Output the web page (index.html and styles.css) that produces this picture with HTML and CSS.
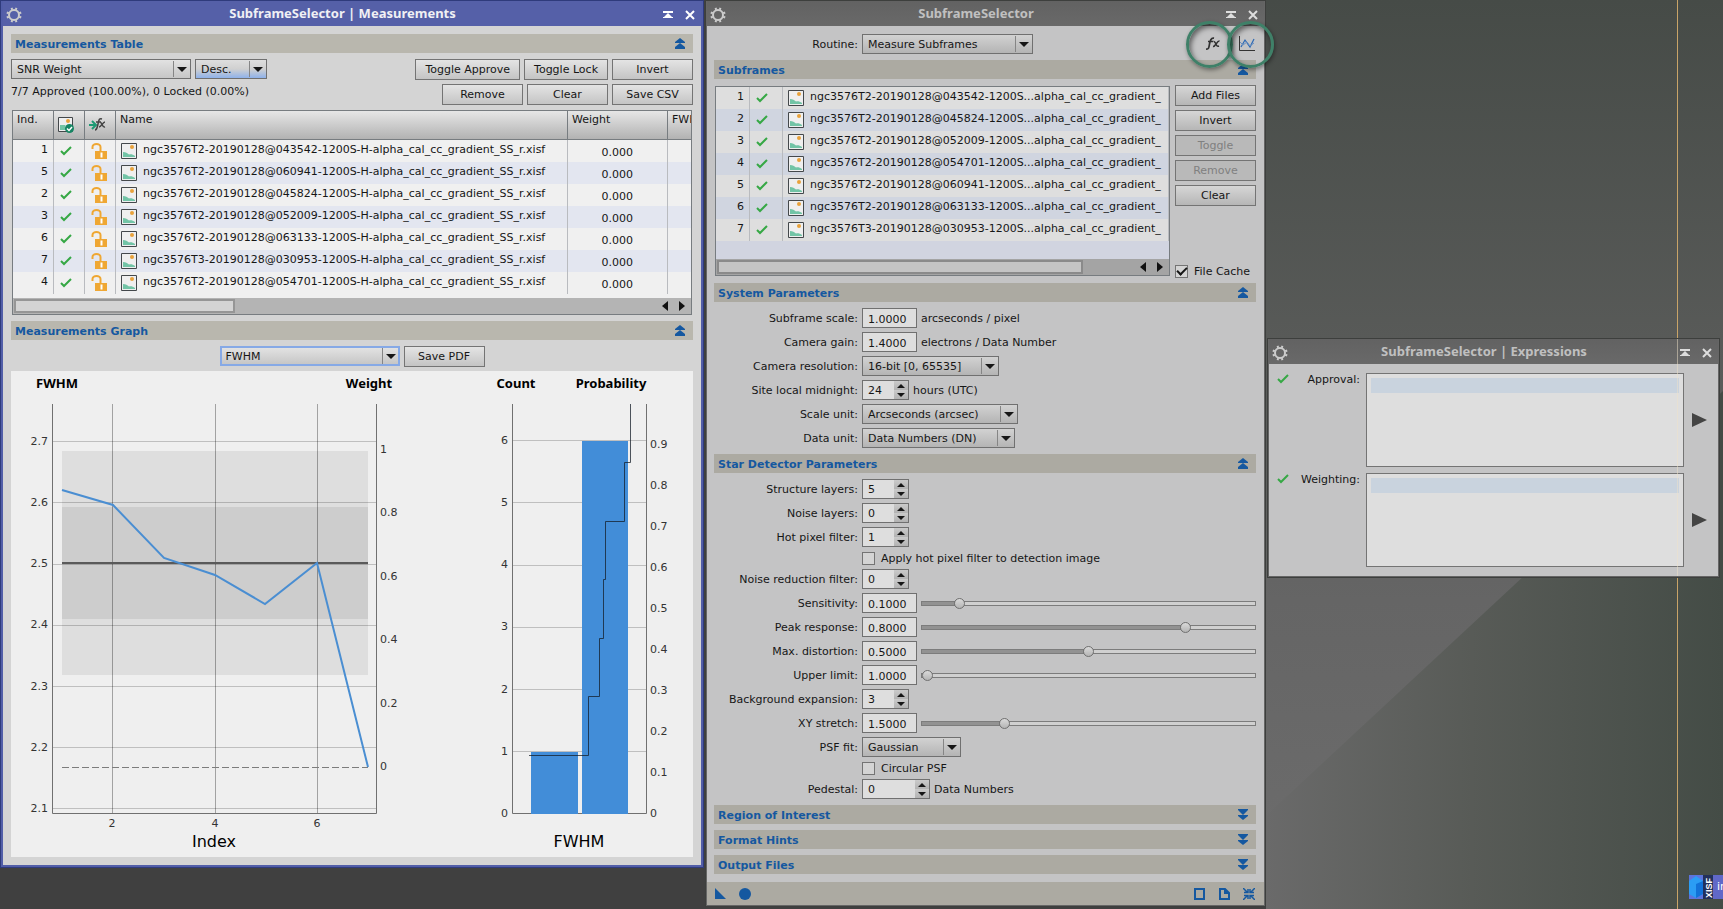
FILE: index.html
```html
<!DOCTYPE html>
<html lang="en">
<head>
<meta charset="utf-8">
<title>SubframeSelector</title>
<link rel="stylesheet" href="styles.css">
</head>
<body>
<!-- shared icons -->
<svg class="symbols" aria-hidden="true">
    <symbol id="gear" viewBox="0 0 16 16">
        <circle cx="8" cy="8" r="5" fill="none" stroke="currentColor" stroke-width="2"/>
        <g stroke="currentColor" stroke-width="2">
            <path d="M5.500 .8l.8 2M10.500 .8l-.8 2M5.500 15.200l.8-2M10.500 15.200l-.8-2M.8 5.500l2 .8M.8 10.500l2-.8M15.200 5.500l-2 .8M15.200 10.500l-2-.8"/>
        </g>
    </symbol>
    <symbol id="shade" viewBox="0 0 10 8">
        <path d="M0 0h10v2H0zM5 2l4 4h1v1H0V6h1z" fill="currentColor"/>
    </symbol>
    <symbol id="close" viewBox="0 0 10 10">
        <path d="M1 1l8 8M9 1l-8 8" stroke="currentColor" stroke-width="2"/>
    </symbol>
    <symbol id="up" viewBox="0 0 12 11">
        <path d="M6 0l5 4v1H1V4zM6 5l5 4v2H1V9z" fill="currentColor"/>
    </symbol>
    <symbol id="down" viewBox="0 0 12 11">
        <path d="M1 0h10v1L6 6 1 1zM1 6h10v1l-5 4-5-4z" fill="currentColor"/>
    </symbol>
    <symbol id="check" viewBox="0 0 12 10">
        <path d="M1 5l3 3 7-7" fill="none" stroke="#36a845" stroke-width="2"/>
    </symbol>
    <symbol id="lock" viewBox="0 0 17 17">
        <path d="M1.500 6V4a4 3 0 0 1 8 0v4" fill="none" stroke="#efa733" stroke-width="2"/>
        <path d="M4 8h12v8H4z" fill="#efa733"/>
        <path d="M9.500 9.500h2v5h-2z" fill="#fff"/>
    </symbol>
    <symbol id="image" viewBox="0 0 16 16">
        <path d="M.5 .5h15v15H.5z" fill="#efefef" stroke="#44484b"/>
        <circle cx="11" cy="4" r="2" fill="#e9a23b"/>
        <path d="M2 14V9c3 0 4 1 6 2.500 2-.5 4 0 6 1.500v1z" fill="#72c4a6"/>
    </symbol>
    <symbol id="approved" viewBox="0 0 17 17">
        <path d="M.5 .5h14v14H.5z" fill="#efefef" stroke="#44484b"/>
        <circle cx="10" cy="4" r="2" fill="#e9a23b"/>
        <path d="M2 8h5l1 5H2z" fill="#72c4a6"/>
        <circle cx="11.500" cy="11.500" r="4.500" fill="#168563"/>
        <path d="M9 11.500l2 2 3-3.500" fill="none" stroke="#fff" stroke-width="1.500"/>
    </symbol>
    <symbol id="gofx" viewBox="0 0 17 14">
        <path d="M0 8h6M3 4l4 4-4 4" fill="none" stroke="#1d9a74" stroke-width="2"/>
        <path d="M6 13c2 0 2-2 3-6s1-6 4-5M7 5h5M11 5c2 0 2 6 5 5M16 5c-2 0-4 5-6 5" fill="none" stroke="#444" stroke-width="1.500"/>
    </symbol>
    <symbol id="fx" viewBox="0 0 14 13">
        <path d="M0 12c3 .5 3-2 3.500-5S5 .5 8 1.200M2 4.500h5" fill="none" stroke="#303030" stroke-width="1.700"/>
        <path d="M7.500 4.500c2.500-1 2 6 5.500 4.500M13.500 4c-2.500-.5-4 6-6.500 5.500" fill="none" stroke="#303030" stroke-width="1.500"/>
    </symbol>
    <symbol id="plot" viewBox="0 0 17 17">
        <path d="M1.500 1v14.500H17" fill="none" stroke="#333"/>
        <path d="M3 12l4-7 5 7 4-8" fill="none" stroke="#2a68b4" stroke-width="1.200"/>
        <path d="M2 7l3 3 4-3 3 4 4-3" fill="none" stroke="#6a8fc0"/>
    </symbol>
    <symbol id="left" viewBox="0 0 6 10"><path d="M6 0v10L0 5z" fill="#111"/></symbol>
    <symbol id="right" viewBox="0 0 6 10"><path d="M0 0v10l6-5z" fill="#111"/></symbol>
</svg>

<div class="desktop">
    <div class="backdrop"></div>
    <div class="guide"></div>

    <div class="tray">
        <svg width="24" height="24" viewBox="0 0 24 24">
            <path d="M0 0h14v24H0z" fill="#5c74dc"/>
            <path d="M0 6l7-5 7 5v13l-7 4-7-4z" fill="#2b9df4"/>
            <path d="M7 9l7-3v13l-7 4z" fill="#1272d8"/>
            <path d="M14 0h10v24H14z" fill="#22305c"/>
            <text x="-23" y="23" transform="rotate(-90)" class="tray-logo">XISF</text>
        </svg>
        <span>in</span>
    </div>

    <!-- Measurements -->
    <section class="window active measurements">
        <header class="titlebar">
            <svg width="16" height="16"><use href="#gear"/></svg>
            <h1>SubframeSelector | Measurements</h1>
            <button aria-label="Shade"><svg width="10" height="8"><use href="#shade"/></svg></button>
            <button aria-label="Close"><svg width="10" height="10"><use href="#close"/></svg></button>
        </header>
        <div class="body">
            <div class="section-bar"><h2>Measurements Table</h2><button aria-label="Collapse"><svg width="12" height="11"><use href="#up"/></svg></button></div>
            <div class="toolbar">
                <div>
                    <div class="line">
                        <span class="combo w180"><select aria-label="Sort by"><option>SNR Weight</option></select></span>
                        <span class="combo w72 hot"><select aria-label="Order"><option>Desc.</option></select></span>
                    </div>
                    <p class="status">7/7 Approved (100.00%), 0 Locked (0.00%)</p>
                </div>
                <div class="actions">
                    <div class="line">
                        <button class="btn">Toggle Approve</button>
                        <button class="btn">Toggle Lock</button>
                        <button class="btn">Invert</button>
                    </div>
                    <div class="line">
                        <button class="btn">Remove</button>
                        <button class="btn">Clear</button>
                        <button class="btn">Save CSV</button>
                    </div>
                </div>
            </div>
            <div class="listbox">
                <table class="measure-table">
                    <colgroup><col class="c-ind"><col class="c-icon"><col class="c-icon"><col class="c-name"><col class="c-weight"><col class="c-weight"></colgroup>
                    <thead>
                        <tr>
                            <th>Ind.</th>
                            <th class="pic"><svg width="17" height="17"><use href="#approved"/></svg></th>
                            <th class="pic"><svg width="17" height="14"><use href="#gofx"/></svg></th>
                            <th>Name</th>
                            <th>Weight</th>
                            <th>FWHM</th>
                        </tr>
                    </thead>
                    <tbody id="measureRows"></tbody>
                </table>
                <div class="scrollbar">
                    <div class="thumb third"></div>
                    <svg width="6" height="10"><use href="#left"/></svg>
                    <svg width="6" height="10"><use href="#right"/></svg>
                </div>
            </div>
            <div class="section-bar"><h2>Measurements Graph</h2><button aria-label="Collapse"><svg width="12" height="11"><use href="#up"/></svg></button></div>
            <div class="line graph-tools">
                <span class="combo w180 focus"><select aria-label="Graph"><option>FWHM</option></select></span>
                <button class="btn">Save PDF</button>
            </div>
            <svg class="graph" viewBox="11 371 682 486">
                <g class="heads">
                    <text x="57" y="388">FWHM</text>
                    <text x="369" y="388">Weight</text>
                    <text x="516" y="388">Count</text>
                    <text x="611" y="388">Probability</text>
                </g>
                <rect x="62" y="451" width="306" height="224" fill="#dedede"/>
                <rect x="62" y="507" width="306" height="112" fill="#cdcdcd"/>
                <path class="grid" d="M53 441.500H376M53 502.500H376M53 564.500H376M53 625.500H376M53 686.500H376M53 747.500H376M53 808.500H376M513 440.500H646M513 502.500H646M513 565.500H646M513 627.500H646M513 689.500H646M513 751.500H646"/>
                <path class="grid strong" d="M112.500 404V813M215.500 404V813M317.500 404V813"/>
                <path class="median" d="M62 563H368"/>
                <path class="dashed" d="M62 767.500H368"/>
                <path class="series" d="M62 490L113 505 164 558 215 575 265 604 317 563 368 767"/>
                <path class="axis" d="M52.500 404V813.500H376.500V404"/>
                <path class="axis" d="M512.500 404V813.500H646.500V404"/>
                <path fill="#428dd8" d="M531 752h47v62h-47zM582 441h46v373h-46z"/>
                <path class="cdf" d="M529 755.500H588.500V696.500H599.500V638.500H603.500V579.500H605.500V521.500H624.500V462.500H630.500V404"/>
                <g class="ticks end" id="ticksLeft"></g>
                <g class="ticks" id="ticksRight"></g>
                <g class="ticks mid">
                    <text x="112" y="827">2</text>
                    <text x="215" y="827">4</text>
                    <text x="317" y="827">6</text>
                </g>
                <g class="axis-names">
                    <text x="214" y="847">Index</text>
                    <text x="579" y="847">FWHM</text>
                </g>
            </svg>
        </div>
    </section>

    <!-- Main process window -->
    <section class="window selector">
        <header class="titlebar">
            <svg width="16" height="16"><use href="#gear"/></svg>
            <h1>SubframeSelector</h1>
            <button aria-label="Shade"><svg width="10" height="8"><use href="#shade"/></svg></button>
            <button aria-label="Close"><svg width="10" height="10"><use href="#close"/></svg></button>
        </header>
        <div class="body">
            <div class="field first">
                <label for="routine">Routine:</label>
                <span class="combo w171"><select id="routine"><option>Measure Subframes</option></select></span>
                <div class="views">
                    <button aria-label="Expressions"><svg width="14" height="13"><use href="#fx"/></svg></button>
                    <button aria-label="Measurements"><svg width="17" height="17"><use href="#plot"/></svg></button>
                </div>
            </div>
            <div class="section-bar"><h2>Subframes</h2><button aria-label="Collapse"><svg width="12" height="11"><use href="#up"/></svg></button></div>
            <div class="subframes">
                <div class="listbox">
                    <table class="subframe-table">
                        <colgroup><col class="c-num"><col class="c-check"><col></colgroup>
                        <tbody id="subframeRows"></tbody>
                    </table>
                    <div class="scrollbar">
                        <div class="thumb wide"></div>
                        <svg width="6" height="10"><use href="#left"/></svg>
                        <svg width="6" height="10"><use href="#right"/></svg>
                    </div>
                </div>
                <div class="side">
                    <button class="btn">Add Files</button>
                    <button class="btn">Invert</button>
                    <button class="btn" disabled>Toggle</button>
                    <button class="btn" disabled>Remove</button>
                    <button class="btn">Clear</button>
                    <label class="tick cache"><input type="checkbox" checked> <span>File Cache</span></label>
                </div>
            </div>

            <div class="section-bar"><h2>System Parameters</h2><button aria-label="Collapse"><svg width="12" height="11"><use href="#up"/></svg></button></div>
            <div class="fields">
                <div class="field"><label for="scale">Subframe scale:</label><input class="edit" id="scale" value="1.0000"><span class="unit">arcseconds / pixel</span></div>
                <div class="field"><label for="gain">Camera gain:</label><input class="edit" id="gain" value="1.4000"><span class="unit">electrons / Data Number</span></div>
                <div class="field"><label for="res">Camera resolution:</label><span class="combo w137"><select id="res"><option>16-bit [0, 65535]</option></select></span></div>
                <div class="field"><label for="midnight">Site local midnight:</label><span class="spin"><input id="midnight" value="24"><button aria-label="Up"></button><button aria-label="Down"></button></span><span class="unit">hours (UTC)</span></div>
                <div class="field"><label for="sunit">Scale unit:</label><span class="combo w156"><select id="sunit"><option>Arcseconds (arcsec)</option></select></span></div>
                <div class="field"><label for="dunit">Data unit:</label><span class="combo w153"><select id="dunit"><option>Data Numbers (DN)</option></select></span></div>
            </div>

            <div class="section-bar"><h2>Star Detector Parameters</h2><button aria-label="Collapse"><svg width="12" height="11"><use href="#up"/></svg></button></div>
            <div class="fields">
                <div class="field"><label for="layers">Structure layers:</label><span class="spin"><input id="layers" value="5"><button aria-label="Up"></button><button aria-label="Down"></button></span></div>
                <div class="field"><label for="noise">Noise layers:</label><span class="spin"><input id="noise" value="0"><button aria-label="Up"></button><button aria-label="Down"></button></span></div>
                <div class="field"><label for="hot">Hot pixel filter:</label><span class="spin"><input id="hot" value="1"><button aria-label="Up"></button><button aria-label="Down"></button></span></div>
                <label class="tick indent"><input type="checkbox"> <span>Apply hot pixel filter to detection image</span></label>
                <div class="field"><label for="nrf">Noise reduction filter:</label><span class="spin"><input id="nrf" value="0"><button aria-label="Up"></button><button aria-label="Down"></button></span></div>
                <div class="field"><label for="sens">Sensitivity:</label><input class="edit" id="sens" value="0.1000"><input type="range" aria-label="Sensitivity" value="10" style="--v:10%"></div>
                <div class="field"><label for="peak">Peak response:</label><input class="edit" id="peak" value="0.8000"><input type="range" aria-label="Peak response" value="80" style="--v:80%"></div>
                <div class="field"><label for="dist">Max. distortion:</label><input class="edit" id="dist" value="0.5000"><input type="range" aria-label="Max. distortion" value="50" style="--v:50%"></div>
                <div class="field"><label for="upper">Upper limit:</label><input class="edit" id="upper" value="1.0000"><input type="range" aria-label="Upper limit" value="0" style="--v:0%"></div>
                <div class="field"><label for="bg">Background expansion:</label><span class="spin"><input id="bg" value="3"><button aria-label="Up"></button><button aria-label="Down"></button></span></div>
                <div class="field"><label for="xy">XY stretch:</label><input class="edit" id="xy" value="1.5000"><input type="range" aria-label="XY stretch" value="24" style="--v:24%"></div>
                <div class="field"><label for="psf">PSF fit:</label><span class="combo w99"><select id="psf"><option>Gaussian</option></select></span></div>
                <label class="tick indent"><input type="checkbox"> <span>Circular PSF</span></label>
                <div class="field"><label for="ped">Pedestal:</label><span class="spin large"><input id="ped" value="0"><button aria-label="Up"></button><button aria-label="Down"></button></span><span class="unit">Data Numbers</span></div>
            </div>

            <div class="section-bar"><h2>Region of Interest</h2><button aria-label="Expand"><svg width="12" height="11"><use href="#down"/></svg></button></div>
            <div class="section-bar"><h2>Format Hints</h2><button aria-label="Expand"><svg width="12" height="11"><use href="#down"/></svg></button></div>
            <div class="section-bar"><h2>Output Files</h2><button aria-label="Expand"><svg width="12" height="11"><use href="#down"/></svg></button></div>
        </div>
        <footer class="controls">
            <button aria-label="New instance"><svg width="12" height="12"><path d="M1 0v11h11z" fill="currentColor"/></svg></button>
            <button aria-label="Apply global"><svg width="12" height="12"><circle cx="6" cy="6" r="6" fill="currentColor"/></svg></button>
            <span class="spacer"></span>
            <button aria-label="Edit instance source"><svg width="12" height="12"><path d="M2 1h9v10H2z" fill="none" stroke="currentColor" stroke-width="2"/></svg></button>
            <button aria-label="Browse documentation"><svg width="12" height="12"><path d="M2 1h5l4 4v6H2zM7 1v4h4" fill="none" stroke="currentColor" stroke-width="2"/></svg></button>
            <button aria-label="Reset"><svg width="12" height="12"><path d="M0 0l4 4M12 0L8 4M0 12l4-4M12 12L8 8M1 4.500h4V1M11 4.500H7V1M1 7.500h4V11M11 7.500H7V11" fill="none" stroke="currentColor" stroke-width="1.500"/></svg></button>
        </footer>
        <div class="ring ring-fx"></div>
        <div class="ring ring-plot"></div>
    </section>

    <!-- Expressions -->
    <section class="window expressions">
        <header class="titlebar">
            <svg width="16" height="16"><use href="#gear"/></svg>
            <h1>SubframeSelector | Expressions</h1>
            <button aria-label="Shade"><svg width="10" height="8"><use href="#shade"/></svg></button>
            <button aria-label="Close"><svg width="10" height="10"><use href="#close"/></svg></button>
        </header>
        <div class="body">
            <div class="expr">
                <svg width="12" height="10"><use href="#check"/></svg>
                <label for="approval">Approval:</label>
                <textarea id="approval"></textarea>
                <button aria-label="Insert"><svg width="15" height="14"><path d="M0 0v14l15-7z" fill="#444"/></svg></button>
            </div>
            <div class="expr">
                <svg width="12" height="10"><use href="#check"/></svg>
                <label for="weighting">Weighting:</label>
                <textarea id="weighting"></textarea>
                <button aria-label="Insert"><svg width="15" height="14"><path d="M0 0v14l15-7z" fill="#444"/></svg></button>
            </div>
        </div>
    </section>
</div>

<script>
var frames = ['T2-20190128@043542', 'T2-20190128@045824', 'T2-20190128@052009', 'T2-20190128@054701',
              'T2-20190128@060941', 'T2-20190128@063133', 'T3-20190128@030953'];
var order = [1, 5, 2, 3, 6, 7, 4];

function icon(name, w, h) {
    return '<svg width="' + w + '" height="' + h + '"><use href="#' + name + '"/></svg>';
}

// measurements, sorted by weight
document.getElementById('measureRows').innerHTML = order.map(function(n) {
    return '<tr><td class="num">' + n + '</td><td class="mark">' + icon('check', 12, 10) + '</td><td class="mark">' + icon('lock', 17, 17) +
        '</td><td class="file">' + icon('image', 16, 16) + '<span>ngc3576' + frames[n - 1] +
        '-1200S-H-alpha_cal_cc_gradient_SS_r.xisf</span></td><td class="weight">0.000</td><td></td></tr>';
}).join('');

// subframe list
document.getElementById('subframeRows').innerHTML = frames.map(function(f, i) {
    return '<tr><td class="num">' + (i + 1) + '</td><td class="mark">' + icon('check', 12, 10) +
        '</td><td class="file">' + icon('image', 16, 16) + '<span>ngc3576' + f + '-1200S...alpha_cal_cc_gradient_</span></td></tr>';
}).join('');

// axis labels, evenly spaced from the bottom value up
function ticks(x, y0, step, labels) {
    return labels.map(function(t, i) {
        return '<text x="' + x + '" y="' + Math.round(y0 - i * step) + '">' + t + '</text>';
    }).join('');
}
document.getElementById('ticksLeft').innerHTML =
    ticks(48, 812, 61.2, ['2.1', '2.2', '2.3', '2.4', '2.5', '2.6', '2.7']) +
    ticks(508, 817, 62.2, [0, 1, 2, 3, 4, 5, 6]);
document.getElementById('ticksRight').innerHTML =
    ticks(380, 770, 63.4, ['0', '0.2', '0.4', '0.6', '0.8', '1']) +
    ticks(650, 817, 41, ['0', '0.1', '0.2', '0.3', '0.4', '0.5', '0.6', '0.7', '0.8', '0.9']);
</script>
</body>
</html>
```
FILE: styles.css
```css
* {
    box-sizing: border-box;
}

body {
    margin: 0;
    font: 11px/14px Verdana, "DejaVu Sans", sans-serif;
    color: #161616;
}

h1, h2, p {
    margin: 0;
}

svg {
    display: block;
    flex: none;
}

button, input, select, textarea {
    font: inherit;
    color: inherit;
    margin: 0;
}

button {
    padding: 0;
    border: none;
    background: none;
}

.symbols {
    position: absolute;
    width: 0;
    height: 0;
}

/* desktop */
.desktop {
    position: relative;
    height: 100vh;
    overflow: hidden;
    background: linear-gradient(#464b47, #585a58 340px, #656565 600px, #6d6d6d);
}

.desktop::before {
    content: "";
    position: absolute;
    left: 0;
    top: 0;
    bottom: 0;
    width: 1266px;
    background: #404040;
}

.backdrop {
    position: absolute;
    left: 1266px;
    right: 0;
    top: 391px;
    bottom: 0;
    background: linear-gradient(90deg, #6a6a6a, #585b57 45%, #444c46);
    clip-path: polygon(0 82%, 100% 0, 100% 100%, 0 100%);
}

.guide {
    position: absolute;
    left: 1677px;
    top: 0;
    bottom: 0;
    width: 1px;
    background: #c9a468;
}

.tray {
    position: absolute;
    left: 1689px;
    top: 875px;
    right: 0;
    height: 24px;
    display: flex;
    align-items: center;
    gap: 4px;
    overflow: hidden;
    background: #6068c8;
    color: #fff;
}

.tray-logo {
    font: bold 9px "Liberation Sans", sans-serif;
    fill: #fff;
}

/* windows */
.window {
    position: absolute;
    display: flex;
    flex-direction: column;
    border: 2px solid #666;
    outline: 1px solid #3d3f3d;
    outline-offset: -1px;
    background: #c4c4c5;
}

.window.active {
    border: 3px solid #525ea8;
    border-width: 1px 3px 3px;
    outline-color: #2f3b7c;
    background: #d4d4d4;
}

.measurements {
    left: 0;
    top: 0;
    width: 704px;
}

.selector {
    left: 705px;
    top: 0;
    width: 561px;
    border-width: 1px 2px 2px;
}

.expressions {
    left: 1267px;
    top: 338px;
    width: 453px;
    border-width: 1px 2px 2px;
}

.expressions::after {
    content: "";
    position: absolute;
    left: 408px;
    top: 0;
    bottom: 0;
    width: 1px;
    background: rgba(240, 225, 200, .5);
}

.titlebar {
    display: flex;
    align-items: center;
    gap: 12px;
    height: 25px;
    padding: 2px 6px 0 3px;
    background: linear-gradient(#626262, #696969);
    color: #c0c0c0;
}

.titlebar > svg {
    color: #ccc;
}

.titlebar h1 {
    flex: 1;
    padding-bottom: 3px;
    text-align: center;
    font: bold 13px/18px "Noto Sans", sans-serif;
}

.titlebar button {
    color: #ddd;
}

.active .titlebar {
    background: #5560a8;
    color: #f0f0f4;
}

.active .titlebar button {
    color: #fff;
}

.body {
    padding: 8px;
}

.selector .body {
    padding: 8px 8px 8px 7px;
}

.section-bar {
    display: flex;
    align-items: center;
    justify-content: space-between;
    height: 19px;
    margin-bottom: 6px;
    padding: 0 7px 0 4px;
    background: #acaaa2;
    color: #1558a0;
}

.active .section-bar {
    background: #b9b7ae;
}

.section-bar:last-child {
    margin-bottom: 0;
}

.section-bar h2 {
    padding-top: 2px;
    font: bold 11px/17px Verdana, "DejaVu Sans", sans-serif;
}

.line {
    display: flex;
    gap: 4px;
}

.toolbar {
    display: flex;
    justify-content: space-between;
    margin-bottom: 5px;
}

.actions {
    display: grid;
    gap: 4px;
}

.actions .line {
    justify-content: flex-end;
}

.status {
    padding-top: 6px;
}

.btn {
    min-width: 81px;
    height: 21px;
    padding: 1px 9px 0;
    border: 1px solid #747474;
    background: linear-gradient(#e4e4e4, #c4c4c4);
    white-space: nowrap;
}

.selector .btn {
    background: linear-gradient(#d6d6d6, #b6b6b6);
}

.selector .btn:disabled {
    background: #b9b9b9;
    color: #808080;
}

/* drop-downs */
.combo {
    position: relative;
    display: block;
    height: 20px;
}

.combo select {
    appearance: none;
    width: 100%;
    height: 20px;
    padding: 1px 20px 0 5px;
    border: 1px solid #707070;
    border-radius: 0;
    background: linear-gradient(#d2d2d2, #b4b4b4);
}

.active .combo select {
    background: linear-gradient(#e2e2e2, #c6c6c6);
}

.combo::before {
    content: "";
    position: absolute;
    right: 17px;
    top: 2px;
    bottom: 2px;
    width: 1px;
    background: #858585;
}

.combo::after {
    content: "";
    position: absolute;
    right: 4px;
    top: 8px;
    border: 5px solid transparent;
    border-top-color: #161616;
    border-bottom: none;
}

.active .combo.hot select {
    background: linear-gradient(#dedede, #d0d0d0 50%, #8fb2ea);
}

.active .combo.focus select {
    border: 2px solid #86a9e6;
    padding-left: 4px;
}

.w72 { width: 72px; }
.w99 { width: 99px; }
.w137 { width: 137px; }
.w153 { width: 153px; }
.w156 { width: 156px; }
.w171 { width: 171px; }
.w180 { width: 180px; }

/* tables */
.listbox {
    margin: 0 1px 6px;
    border: 1px solid #777c80;
    background: #f0f0f0;
    overflow: hidden;
}

table {
    table-layout: fixed;
    border-collapse: separate;
    border-spacing: 0;
}

.measure-table {
    width: 755px;
    margin-bottom: 4px;
}

.c-ind { width: 41px; }
.c-icon { width: 31px; }
.c-name { width: 452px; }
.c-weight { width: 100px; }
.c-num { width: 34px; }
.c-check { width: 33px; }

th {
    height: 29px;
    padding: 2px 4px;
    border-right: 1px solid #777c80;
    border-bottom: 1px solid #777c80;
    background: linear-gradient(#e6e6e6, #b2b2b2);
    vertical-align: top;
    text-align: left;
    font-weight: normal;
}

th.pic {
    padding: 6px 4px 0;
}

td {
    height: 22px;
    padding: 0 5px;
    border-right: 1px solid #b9bbbf;
    white-space: nowrap;
}

tr:nth-child(even) td {
    background: #e3e6f0;
}

td.num {
    padding-bottom: 3px;
    text-align: right;
}

td.mark {
    padding-left: 6px;
}

td.file {
    display: flex;
    align-items: center;
    gap: 6px;
}

td.file span {
    padding-bottom: 3px;
}

td.weight {
    padding: 3px 34px 0 0;
    text-align: right;
}

.subframe-table {
    width: 453px;
}

.selector .listbox {
    flex: 1;
    min-width: 0;
    margin: 1px 5px 2px 1px;
    display: flex;
    flex-direction: column;
    background: #d1d4e0;
}

.selector td {
    background: #dedede;
}

.selector tr:nth-child(even) td {
    background: #d0d5e0;
}

.scrollbar {
    display: flex;
    align-items: center;
    gap: 11px;
    height: 16px;
    margin-top: auto;
    padding: 0 6px 0 1px;
    background: #b4b4b4;
}

.selector .scrollbar {
    background: #a4a4a4;
}

.thumb {
    height: 14px;
    margin-right: auto;
    border: 2px solid #969696;
    background: #d4d4d4;
}

.selector .thumb {
    border-color: #8a8a8a;
    background: #c4c4c4;
}

.thumb.third { width: 33%; }
.thumb.wide { width: 82%; }

.subframes {
    display: flex;
    margin-bottom: 5px;
}

.side {
    display: flex;
    flex-direction: column;
    gap: 4px;
    width: 81px;
    height: 193px;
}

.cache {
    margin-top: auto;
}

/* graph */
.graph-tools {
    justify-content: center;
    margin-bottom: 4px;
}

.graph {
    width: 100%;
    background: #efefef;
}

.heads text {
    font: bold 13px "Noto Sans", sans-serif;
    text-anchor: middle;
    fill: #000;
}

.axis-names text {
    font-size: 16px;
    text-anchor: middle;
}

.ticks text {
    fill: #333;
}

.ticks.end text {
    text-anchor: end;
}

.ticks.mid text {
    text-anchor: middle;
}

.grid, .axis, .median, .dashed, .series, .cdf {
    fill: none;
    stroke: rgba(0, 0, 0, .2);
}

.grid.strong {
    stroke: rgba(0, 0, 0, .32);
}

.axis {
    stroke: #707070;
}

.median {
    stroke: #5a5a5a;
    stroke-width: 2;
}

.dashed {
    stroke: #7c7c7c;
    stroke-dasharray: 7 3;
}

.series {
    stroke: #4a8ed2;
    stroke-width: 2;
}

.cdf {
    stroke: rgba(20, 30, 40, .75);
}

/* parameters */
.fields {
    display: grid;
    gap: 4px;
    margin-bottom: 6px;
}

.field {
    display: flex;
    align-items: center;
    gap: 4px;
    height: 20px;
}

.field > label {
    width: 144px;
    padding-top: 2px;
    text-align: right;
}

.field .unit {
    padding-top: 2px;
}

.field.first {
    margin-bottom: 6px;
}

.views {
    display: flex;
    align-items: center;
    gap: 18px;
    margin-left: auto;
    padding: 0 1px 2px 0;
}

.edit {
    width: 55px;
    height: 20px;
    padding: 2px 5px 0;
    border: 1px solid #707070;
    background: #dedede;
}

.spin {
    display: grid;
    grid-template: 9px 9px / 1fr 14px;
    width: 47px;
    height: 20px;
    border: 1px solid #707070;
    background: #dedede;
}

.spin.large {
    width: 68px;
}

.spin input {
    grid-row: span 2;
    min-width: 0;
    padding: 2px 5px 0;
    border: none;
    background: none;
}

.spin button {
    display: grid;
    place-items: center;
    background: linear-gradient(#cacaca, #b2b2b2);
}

.spin button::before {
    content: "";
    border: 4px solid transparent;
    border-bottom-color: #161616;
    border-top: none;
}

.spin button:last-child::before {
    border: 4px solid transparent;
    border-top-color: #161616;
    border-bottom: none;
}

input[type=range] {
    appearance: none;
    flex: 1;
    min-width: 0;
    height: 12px;
    background: none;
}

input[type=range]::-webkit-slider-runnable-track {
    height: 5px;
    border: 1px solid #7c7c7c;
    background: linear-gradient(90deg, #929292 var(--v), #d0d0d0 var(--v));
}

input[type=range]::-webkit-slider-thumb {
    appearance: none;
    width: 11px;
    height: 11px;
    margin-top: -4px;
    border: 1px solid #707070;
    border-radius: 50%;
    background: linear-gradient(#dadada, #b4b4b4);
}

.tick {
    display: flex;
    align-items: center;
    gap: 6px;
    height: 14px;
    white-space: nowrap;
}

.tick.indent {
    padding-left: 148px;
}

.tick span {
    padding-top: 2px;
}

.tick input {
    appearance: none;
    display: grid;
    place-items: center;
    width: 13px;
    height: 13px;
    border: 1px solid #747474;
    background: #d4d4d4;
}

.tick input:checked::before {
    content: "";
    width: 8px;
    height: 4px;
    margin-bottom: 2px;
    border: solid #161616;
    border-width: 0 0 2px 2px;
    transform: rotate(-45deg);
}

.controls {
    display: flex;
    align-items: center;
    gap: 13px;
    height: 23px;
    padding: 0 9px 0 7px;
    background: #acaaa2;
    color: #1558a0;
}

.spacer {
    flex: 1;
}

/* highlight rings around the two view buttons */
.ring {
    position: absolute;
    top: 20px;
    width: 47px;
    height: 47px;
    border: 3px solid #3f8068;
    border-radius: 50%;
    box-shadow: 1px 2px 4px rgba(0, 0, 0, .4), inset 2px 3px 5px rgba(0, 0, 0, .5);
}

.ring-fx {
    right: 31px;
}

.ring-plot {
    right: -10px;
}

/* expressions */
.expressions .body {
    display: grid;
    gap: 6px;
    padding: 9px 11px 9px 8px;
}

.expr {
    display: flex;
}

.expr > svg {
    margin-top: 1px;
}

.expr label {
    width: 71px;
    margin-right: 6px;
    text-align: right;
}

.expr textarea {
    flex: 1;
    height: 94px;
    border: 1px solid #747474;
    border-radius: 0;
    resize: none;
    background: linear-gradient(#c9d3de, #c9d3de) 4px 4px / calc(100% - 8px) 15px no-repeat #dedede;
}

.expr button {
    margin-left: 8px;
}
```
